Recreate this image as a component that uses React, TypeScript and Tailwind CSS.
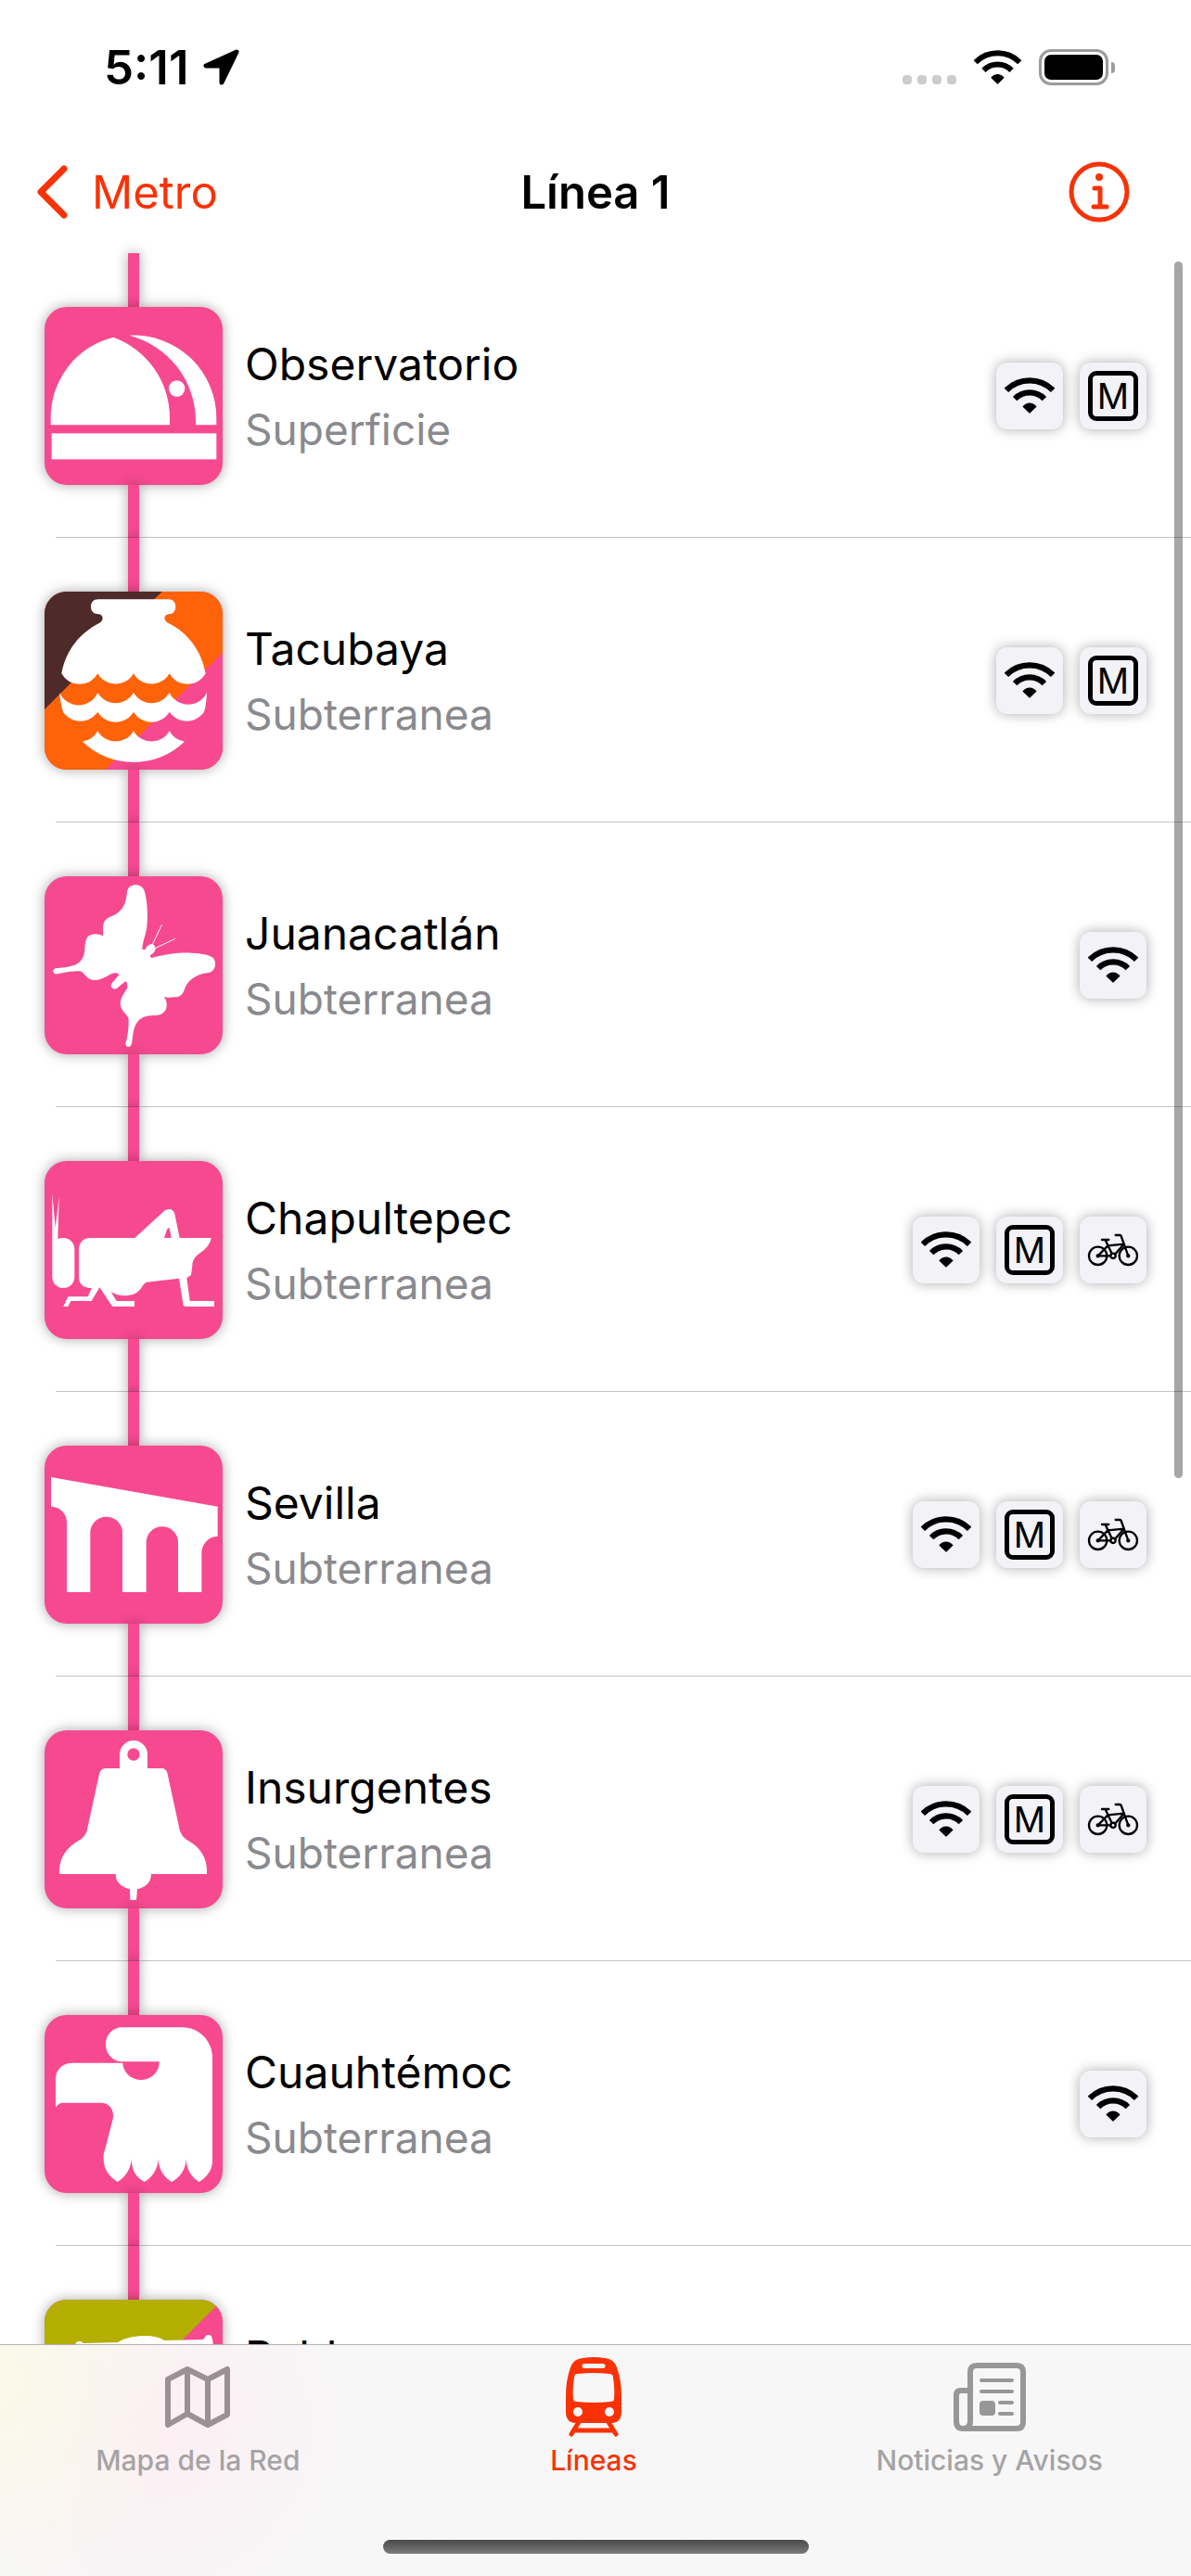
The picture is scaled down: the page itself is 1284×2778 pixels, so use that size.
import type { ReactNode } from "react"

type Service = "wifi" | "metrobus" | "bike"

interface Station {
    name: string
    kind: string
    services: Service[]
    logo: ReactNode
}

const PINK = "#f74990"

const ObservatorioLogo = () => (
    <svg viewBox="0 0 576 576" className="size-full" fill="#fff" aria-hidden="true">
        <path d="M20 382V362A268 268 0 0 1 223 98A278 278 0 0 1 405 362V382Z" />
        <path d="M274 92A268 268 0 0 1 556 362V382H489V365A287 287 0 0 0 274 92Z" />
        <circle cx="428" cy="264" r="26" />
        <rect x="23" y="409" width="533" height="84" />
    </svg>
)

const TacubayaLogo = () => (
    <svg viewBox="54 53 576 576" className="size-full" fill="#fff" aria-hidden="true">
        <path d="M54 53H630V629H54Z" fill="#ff6309" />
        <path d="M54 53H434L54 434Z" fill="#4e2a28" />
        <path d="M630 250V629H250Z" fill={PINK} />
        <path d="M228 78H454C470 78 478 88 478 102S470 126 456 126C440 127 437 146 453 154C518 185 562 245 575 318A67 67 0 0 1 458 318A67 67 0 0 1 342 318A67 67 0 0 1 226 318A67 67 0 0 1 109 318C122 245 166 188 232 154C248 146 243 127 230 126C212 126 204 116 204 102S212 78 228 78Z" />
        <path d="M103 380A67 67 0 0 0 226 380A67 67 0 0 0 342 380A67 67 0 0 0 458 380A67 67 0 0 0 579 380C578 405 575 425 570 442A67 67 0 0 1 458 442A67 67 0 0 1 342 442A67 67 0 0 1 226 442A67 67 0 0 1 114 442C107 420 104 400 103 380Z" />
        <path d="M177 538A67 67 0 0 0 226 504A67 67 0 0 0 342 504A67 67 0 0 0 458 504A67 67 0 0 0 507 538A237 237 0 0 1 177 538Z" />
    </svg>
)

const JuanacatlanLogo = () => (
    <svg viewBox="54 45 576 576" className="size-full" fill="#fff" aria-hidden="true">
        <path d="M321 96C323 80 335 73 350 73C366 73 376 84 379 100C386 130 388 160 386 195C384 235 370 255 370 282L380 282C383 272 392 265 402 264C406 262 412 272 413 278C412 288 406 294 397 299C395 303 396 308 402 309C440 297 490 291 530 293C560 295 585 298 597 307C610 318 608 340 598 350C590 358 580 356 565 360C530 372 515 388 507 410C500 430 490 436 475 436C460 438 450 438 440 434C450 446 450 460 448 472C442 487 432 494 415 495C395 496 380 495 362 508C342 528 341 548 337 582C336 592 330 597 326 597C318 597 315 590 317 582C322 570 328 530 325 502C315 488 299 475 299 457C300 435 315 420 322 405C322 398 322 390 317 384L290 406C282 414 268 408 269 397C270 392 275 387 278 384L295 364C290 356 280 357 272 360C255 368 235 381 219 381C197 381 190 368 177 356C172 351 165 351 155 352C135 353 110 358 97 361C86 363 81 356 82 350C84 343 90 342 97 342C115 340 140 338 158 329C178 318 183 300 184 280C185 262 187 245 197 238C210 229 230 230 243 238C243 225 242 205 246 195C254 178 270 176 284 168C305 155 318 135 321 96Z" />
        <path d="M402 268L433 202M412 278L476 247" stroke="#fff" strokeWidth="3" />
    </svg>
)

const ChapultepecLogo = () => (
    <svg viewBox="54 51 576 576" className="size-full" fill="#fff" aria-hidden="true">
        <path d="M79 155L89 266L101 168L97 303C102 301 108 300 115 300C135 300 151 315 151 336V425C151 447 135 462 115 462C95 462 79 447 79 425Z" />
        <path
            fillRule="evenodd"
            d="M201 300H346L440 214C452 203 470 204 475 222L491 300H593C590 320 577 335 557 349C540 360 532 375 532 390L528 420L514 430L524 504H603V522H512C505 522 502 518 502 512L489 431L384 443C375 448 370 455 367 462C355 480 335 487 312 487C295 487 280 482 269 475L287 504H345V522H277C273 521 272 520 270 517L232 460L206 504H139L130 522H115L130 490H194L207 462C180 462 165 450 165 425V338C165 315 180 300 201 300ZM441 300L449 275C452 267 457 265 459 272L464 300Z"
        />
    </svg>
)

const SevillaLogo = () => (
    <svg viewBox="54 57 576 576" className="size-full" fill="#fff" aria-hidden="true">
        <path d="M75 159L614 254V350C585 351 562 375 562 405V531H486V370A51 51 0 0 0 383 370V531H306V339A52 52 0 0 0 202 339V531H126V305C126 277 105 255 75 254Z" />
    </svg>
)

const InsurgentesLogo = () => (
    <svg viewBox="54 48 576 576" className="size-full" fill="#fff" aria-hidden="true">
        <path d="M297 171V126A45 45 0 0 1 387 126V171H432C444 171 450 178 452 190L491 370C497 390 507 398 520 406C560 428 579 465 579 500V513H399C399 540 380 557 354 562L351 597H331L330 562C305 557 284 540 284 513H102V500C104 455 130 425 163 406C180 396 190 382 192 368L231 190C234 178 240 171 252 171Z" />
        <circle cx="342" cy="126" r="20" fill={PINK} />
    </svg>
)

const CuauhtemocLogo = () => (
    <svg viewBox="54 54 576 576" className="size-full" fill="#fff" aria-hidden="true">
        <path d="M305 94H500C555 94 597 140 597 190V530C595 560 575 580 554 594C530 580 513 555 512 520C511 555 490 582 465 594C442 580 423 555 422 520C420 555 400 582 377 594C350 580 335 555 335 520C333 555 312 582 290 594C262 576 246 555 245 520C244 500 248 495 252 480L275 390C281 360 262 338 238 338H118C104 338 98 342 90 353V262C90 230 112 209 145 209H307A59 57 0 0 0 425 205H302C272 202 252 178 252 149C252 118 275 94 305 94Z" />
    </svg>
)

const BalderasLogo = () => (
    <svg viewBox="0 0 192 192" className="size-full" fill="#fff" aria-hidden="true">
        <path d="M0 0H192V192H0Z" fill="#b3ae00" />
        <path d="M192 0V192H0Z" fill={PINK} />
        <path d="M33 60V50C33 45 38 43 42 47L79 46C90 38 120 36 129 44L170 43C173 43 173 38 176 38C181 37 182 42 182 60L120 70H90Z" />
    </svg>
)

const WifiIcon = ({ className }: { className: string }) => (
    <svg viewBox="160 204 160 118" className={className} fill="none" stroke="#000" aria-hidden="true">
        <path d="M164 246A107 107 0 0 1 316 246" strokeWidth="19" />
        <path d="M192 274A67 67 0 0 1 288 274" strokeWidth="19" />
        <path d="M238 320L217 299C230 283 250 283 263 299L242 320Q240 322 238 320Z" fill="#000" stroke="none" />
    </svg>
)

const BikeIcon = () => (
    <svg viewBox="696 210 168 108" className="h-9 w-14" fill="none" stroke="#000" strokeWidth="7" strokeLinecap="round" strokeLinejoin="round" aria-hidden="true">
        <circle cx="731" cy="283" r="29" />
        <circle cx="829" cy="283" r="29" />
        <circle cx="780" cy="283" r="8" />
        <circle cx="731" cy="283" r="3" />
        <circle cx="829" cy="283" r="3" />
        <path d="M744 231H766M755 232L776 276M731 283L763 250L815 245L786 278M731 283H772M788 216H802Q805 216 806 219L829 283" />
    </svg>
)

const MapIcon = () => (
    <svg viewBox="0 0 70 68" className="h-[68px] w-[70px]" fill="none" stroke="#9b9093" strokeWidth="6" strokeLinejoin="round" aria-hidden="true">
        <path d="M3 15L24 4L46 15L67 4V53L46 64L24 52L3 64ZM24 4V52M46 15V64" />
    </svg>
)

const TrainIcon = () => (
    <svg viewBox="0 0 60 86" className="h-[86px] w-[60px]" aria-hidden="true">
        <path
            fill="#f93206"
            fillRule="evenodd"
            d="M18 1Q30 -1 42 1Q52 2 55 11Q60 25 60 42V59Q60 71 49 71H11Q0 71 0 59V42Q0 25 5 11Q8 2 18 1ZM20 7A2 2 0 0 0 20 12H40A2 2 0 0 0 40 7ZM13 18Q9 18 9 22Q7 34 8 45Q8 48 12 48Q30 50 48 48Q52 48 52 45Q53 34 51 22Q51 18 47 18Q30 16 13 18ZM13 54A5 5 0 0 0 13 64A5 5 0 0 0 13 54ZM47 54A5 5 0 0 0 47 64A5 5 0 0 0 47 54Z"
        />
        <path d="M14 70L6 83M46 70L54 83M10 79H50" fill="none" stroke="#f93206" strokeWidth="5" strokeLinecap="round" />
    </svg>
)

const NewsIcon = () => (
    <svg viewBox="0 0 78 74" className="h-[74px] w-[78px]" fill="none" stroke="#969896" strokeLinecap="round" strokeLinejoin="round" aria-hidden="true">
        <path d="M10 71H68Q75 71 75 64V10Q75 3 68 3H25Q18 3 18 10V63Q18 71 10 71Q3 71 3 63V35Q3 30 8 30H17" strokeWidth="6" />
        <path d="M30 19H63M30 31H63M50 43H63M50 55H63" strokeWidth="4" />
        <rect x="28" y="41" width="17" height="16" rx="4" fill="#969896" stroke="none" />
    </svg>
)

const stations: Station[] = [
    { name: "Observatorio", kind: "Superficie", services: ["wifi", "metrobus"], logo: <ObservatorioLogo /> },
    { name: "Tacubaya", kind: "Subterranea", services: ["wifi", "metrobus"], logo: <TacubayaLogo /> },
    { name: "Juanacatlán", kind: "Subterranea", services: ["wifi"], logo: <JuanacatlanLogo /> },
    { name: "Chapultepec", kind: "Subterranea", services: ["wifi", "metrobus", "bike"], logo: <ChapultepecLogo /> },
    { name: "Sevilla", kind: "Subterranea", services: ["wifi", "metrobus", "bike"], logo: <SevillaLogo /> },
    { name: "Insurgentes", kind: "Subterranea", services: ["wifi", "metrobus", "bike"], logo: <InsurgentesLogo /> },
    { name: "Cuauhtémoc", kind: "Subterranea", services: ["wifi"], logo: <CuauhtemocLogo /> },
    { name: "Balderas", kind: "Subterranea", services: ["wifi"], logo: <BalderasLogo /> },
]

const StatusBar = () => (
    <div className="flex h-[141px] shrink-0 items-center justify-between pt-1 pr-[82px] pl-28">
        <div className="flex items-center gap-4">
            <span className="text-[51px] leading-none font-semibold">5:11</span>
            <svg viewBox="0 0 39 39" className="size-[39px]" stroke="#000" strokeWidth="5" strokeLinejoin="round" aria-hidden="true">
                <path d="M36 3L3 18H20V36Z" />
            </svg>
        </div>
        <div className="flex items-center gap-[19px]">
            <div className="flex h-9 items-end gap-1.5">
                {[0, 1, 2, 3].map((i) => (
                    <span key={i} className="size-2.5 rounded-[4px] bg-[#cccccc]" />
                ))}
            </div>
            <WifiIcon className="h-[37px] w-[51px]" />
            <div className="flex items-center gap-[3px]">
                <div className="h-[39px] w-[75px] rounded-[13px] border-3 border-[#9b9b9b] p-[3px]">
                    <div className="h-full rounded-[7px] bg-black" />
                </div>
                <div className="h-3 w-1 rounded-r-full bg-[#9b9b9b]" />
            </div>
        </div>
    </div>
)

const NavBar = () => (
    <header className="grid h-[132px] shrink-0 grid-cols-3 items-center pr-[66px] pl-10 text-[49px] leading-none">
        <button className="flex items-center gap-[26px] justify-self-start text-[#f93206]">
            <svg viewBox="0 0 33 58" className="h-[58px] w-[33px]" fill="none" stroke="currentColor" strokeWidth="7" strokeLinecap="round" strokeLinejoin="round" aria-hidden="true">
                <path d="M29 4L4 29L29 54" />
            </svg>
            Metro
        </button>
        <h1 className="justify-self-center pl-[26px] font-semibold">Línea 1</h1>
        <button aria-label="Información" className="justify-self-end text-[#f93206]">
            <svg viewBox="0 0 66 66" className="size-[66px]" fill="none" stroke="currentColor" strokeWidth="5" strokeLinecap="round" strokeLinejoin="round" aria-hidden="true">
                <circle cx="33" cy="33" r="30" />
                <path d="M28 29H34V48M27 49H41" />
                <circle cx="33" cy="17" r="4" fill="currentColor" stroke="none" />
            </svg>
        </button>
    </header>
)

const ServiceBadge = ({ service }: { service: Service }) => (
    <div className="flex size-[72px] items-center justify-center rounded-xl bg-[#f2f2f7] shadow-[0_0_14px_rgba(0,0,0,0.33)]">
        {service === "wifi" && <WifiIcon className="h-[39px] w-[54px]" />}
        {service === "metrobus" && (
            <span className="flex size-[54px] items-center justify-center rounded-[9px] border-5 border-black text-[38px] leading-none">
                M
            </span>
        )}
        {service === "bike" && <BikeIcon />}
    </div>
)

const StationRow = ({ station }: { station: Station }) => (
    <li className="relative flex shrink-0 items-center px-12">
        {/* Line segment, logo, line segment */}
        <div className="flex w-48 shrink-0 flex-col items-center">
            <div className="h-[58px] w-3 bg-[#f74990] shadow-[0_0_14px_rgba(0,0,0,0.35)]" />
            <div className="size-48 overflow-hidden rounded-3xl bg-[#f74990] shadow-[0_0_14px_rgba(0,0,0,0.35)]">{station.logo}</div>
            <div className="h-[57px] w-3 bg-[#f74990] shadow-[0_0_14px_rgba(0,0,0,0.35)]" />
        </div>
        <div className="ml-6 grow pt-0.5 leading-[71px]">
            <p className="text-[48px]">{station.name}</p>
            <p className="text-[46px] text-[#8a8a8e]">{station.kind}</p>
        </div>
        <div className="flex gap-[18px]">
            {station.services.map((service) => (
                <ServiceBadge key={service} service={service} />
            ))}
        </div>
        <div className="absolute right-0 bottom-0 left-[60px] h-px bg-[#3c3c43]/30" />
    </li>
)

const TabBar = () => (
    <nav className="relative shrink-0 border-t border-[#b2b2b2] bg-[#f7f7f7] bg-[radial-gradient(ellipse_200px_230px_at_0px_40px,#f9fae8,transparent),radial-gradient(ellipse_230px_220px_at_160px_90px,#fceef3,transparent)] pt-2 pb-6">
        <div className="grid grid-cols-3 pr-1 text-[30px] leading-10 font-medium text-[#a5a3a4]">
            <button className="flex flex-col items-center">
                <span className="flex h-24 items-center"><MapIcon /></span>
                Mapa de la Red
            </button>
            <button className="flex flex-col items-center text-[#f93206]">
                <span className="flex h-24 items-center"><TrainIcon /></span>
                Líneas
            </button>
            <button className="flex flex-col items-center">
                <span className="flex h-24 items-center"><NewsIcon /></span>
                Noticias y Avisos
            </button>
        </div>
        {/* Home indicator */}
        <div className="mx-auto mt-[66px] h-[15px] w-[459px] rounded-full bg-linear-to-b from-[#4a4a4a] to-[#7b7b7b]" />
    </nav>
)

const App = () => {
    return (
        <div className="flex h-screen flex-col overflow-hidden bg-white font-['Inter','Liberation_Sans',sans-serif] text-black">
            <StatusBar />
            <NavBar />
            <main className="relative min-h-0 grow">
                <ul className="flex h-full flex-col [clip-path:inset(-20px_0_0_0)]">
                    {stations.map((station) => (
                        <StationRow key={station.name} station={station} />
                    ))}
                </ul>
                <div className="absolute top-[9px] right-[9px] h-[1312px] w-[9px] rounded-full bg-black/35" />
            </main>
            <TabBar />
        </div>
    )
}

export default App
